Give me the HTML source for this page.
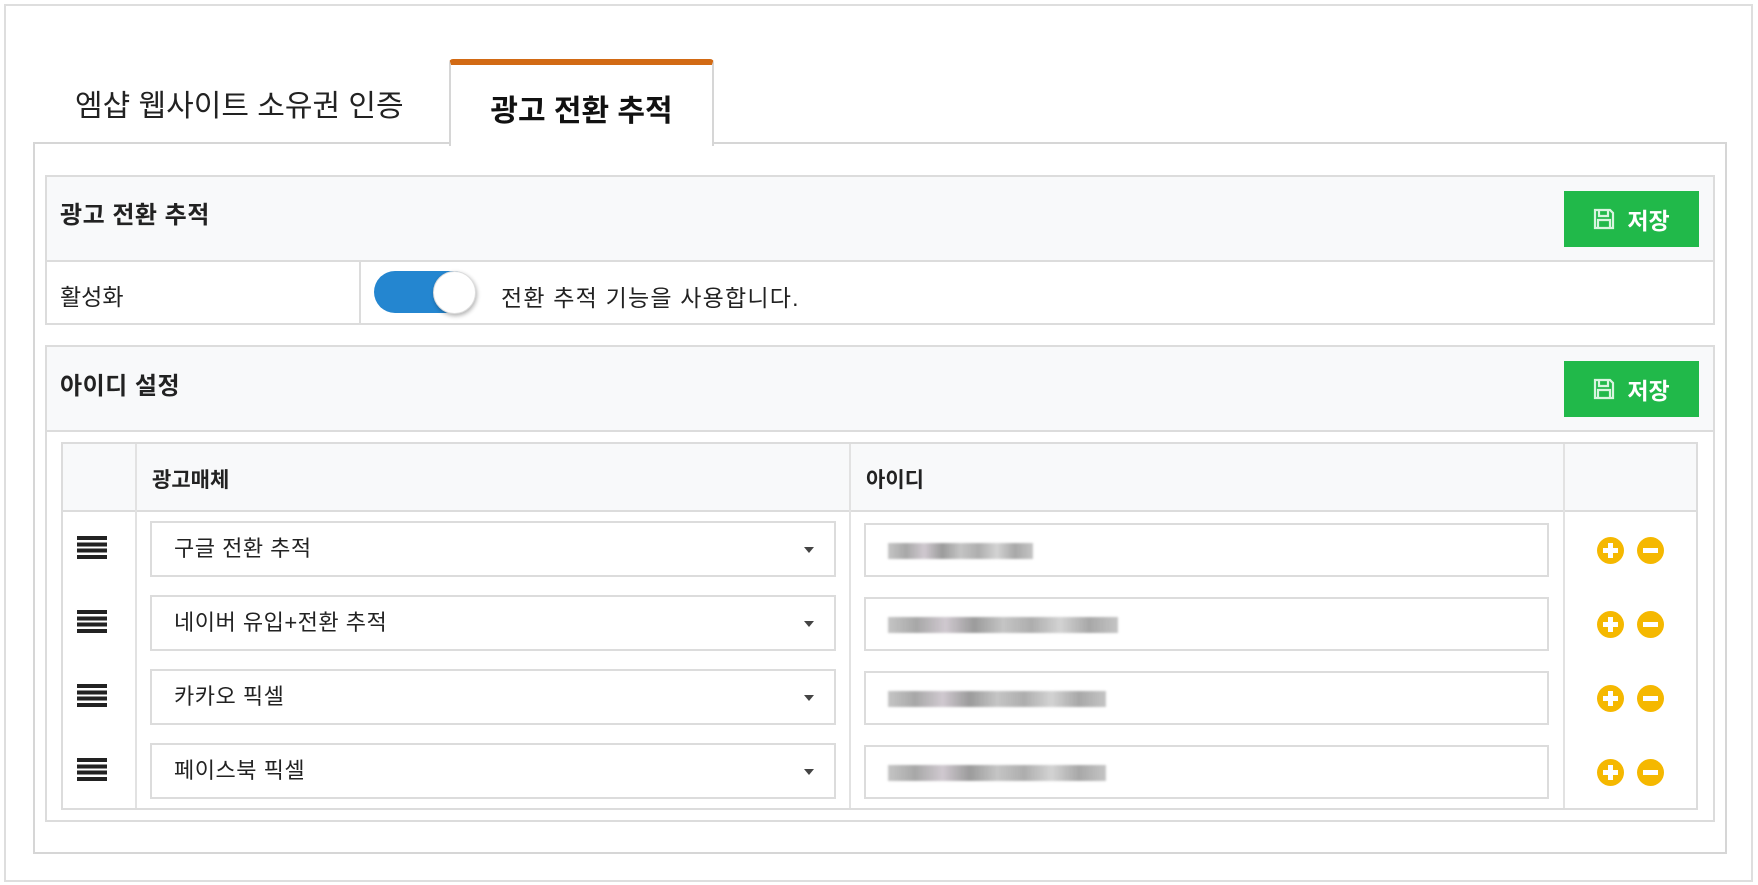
<!DOCTYPE html>
<html><head><meta charset="utf-8"><style>
*{box-sizing:border-box;margin:0;padding:0}
body{width:1758px;height:885px;background:#fff;font-family:"Liberation Sans","Noto Sans CJK KR",sans-serif;color:#222;position:relative;overflow:hidden}
.a{position:absolute}
.bd{border:2px solid #dcdcdc}
.btn{position:absolute;left:1564px;width:135px;height:56px;background:#21b94a;color:#fff;font-weight:bold;font-size:23px;display:flex;align-items:center;justify-content:center;gap:12px}
.sel{position:absolute;left:150px;width:686px;height:56px;border:2px solid #dcdcdc;background:#fff;font-size:22px;padding-left:22px;line-height:52px;letter-spacing:.5px}
.sel:after{content:"";position:absolute;right:20px;top:24px;border:5px solid transparent;border-top:6px solid #444}
.inp{position:absolute;left:864px;width:685px;height:54px;border:2px solid #dcdcdc;background:#fff}
.blur{position:absolute;left:22px;top:18px;height:16px;background:linear-gradient(90deg,#bbb,#999,#c8c0c8,#8a8a8a,#bbb,#a0a0a0,#ccc,#999,#bbb);opacity:.85;filter:blur(1px)}
.ham{position:absolute;left:77px;width:30px;height:23px;background:repeating-linear-gradient(#222 0 4px,transparent 4px 6.3px)}
.ic{position:absolute;width:27px;height:27px;border-radius:50%;background:#f5b800}
.ic.p:before{content:"";position:absolute;left:11px;top:6px;width:5px;height:15px;background:#fff}
.ic:after{content:"";position:absolute;left:6px;top:11px;width:15px;height:5px;background:#fff}
</style></head><body>
<div class="a" style="left:4px;top:4px;width:1749px;height:878px;border:2px solid #dedede"></div>
<div class="a" style="left:33px;top:142px;width:1694px;height:712px;border:2px solid #d6d6d6"></div>
<div class="a" style="left:75px;top:81px;font-size:30px;color:#222">엠샵 웹사이트 소유권 인증</div>
<div class="a" style="left:449px;top:59px;width:265px;height:87px;background:#fff;border:2px solid #d6d6d6;border-bottom:none;border-top:6px solid #d26a14;border-radius:4px 4px 0 0"></div>
<div class="a" style="left:449px;top:86px;width:265px;text-align:center;font-size:30px;font-weight:bold;color:#111">광고 전환 추적</div>
<!-- panel 1 -->
<div class="a bd" style="left:45px;top:175px;width:1670px;height:150px"></div>
<div class="a" style="left:47px;top:177px;width:1666px;height:85px;background:#f8f9fa;border-bottom:2px solid #dcdcdc"></div>
<div class="a" style="left:60px;top:195px;font-size:24px;font-weight:bold;letter-spacing:.5px">광고 전환 추적</div>
<div class="btn" style="top:191px"><svg width="22" height="22" viewBox="0 0 22 22"><path d="M2 2h15l3 3v15H2z M6 2v6h9V2 M5 20v-8h12v8" fill="none" stroke="#d8f5df" stroke-width="2.2"/></svg>저장</div>
<div class="a" style="left:359px;top:262px;width:2px;height:62px;background:#dcdcdc"></div>
<div class="a" style="left:60px;top:278px;font-size:23px">활성화</div>
<div class="a" style="left:374px;top:271px;width:101px;height:42px;border-radius:21px;background:#2486d0"></div>
<div class="a" style="left:433px;top:271px;width:43px;height:43px;border-radius:50%;background:#fff;border:1px solid #ddd;box-shadow:1px 2px 4px rgba(0,0,0,.3)"></div>
<div class="a" style="left:501px;top:279px;font-size:23px;letter-spacing:1.2px">전환 추적 기능을 사용합니다.</div>
<!-- panel 2 -->
<div class="a bd" style="left:45px;top:345px;width:1670px;height:477px"></div>
<div class="a" style="left:47px;top:347px;width:1666px;height:85px;background:#f8f9fa;border-bottom:2px solid #dcdcdc"></div>
<div class="a" style="left:60px;top:366px;font-size:24px;font-weight:bold;letter-spacing:.5px">아이디 설정</div>
<div class="btn" style="top:361px"><svg width="22" height="22" viewBox="0 0 22 22"><path d="M2 2h15l3 3v15H2z M6 2v6h9V2 M5 20v-8h12v8" fill="none" stroke="#d8f5df" stroke-width="2.2"/></svg>저장</div>
<!-- table -->
<div class="a bd" style="left:61px;top:442px;width:1637px;height:368px"></div>
<div class="a" style="left:63px;top:444px;width:1633px;height:68px;background:#f8f9fa;border-bottom:2px solid #dcdcdc"></div>
<div class="a" style="left:135px;top:444px;width:2px;height:364px;background:#e2e2e2"></div>
<div class="a" style="left:849px;top:444px;width:2px;height:364px;background:#e2e2e2"></div>
<div class="a" style="left:1563px;top:444px;width:2px;height:364px;background:#e2e2e2"></div>
<div class="a" style="left:152px;top:464px;font-size:21px;font-weight:bold">광고매체</div>
<div class="a" style="left:866px;top:464px;font-size:21px;font-weight:bold">아이디</div>

<div class="ham" style="top:536px"></div>
<div class="sel" style="top:521px">구글 전환 추적</div>
<div class="inp" style="top:523px"><div class="blur" style="width:145px"></div></div>
<div class="ic p" style="left:1597px;top:537px"></div><div class="ic" style="left:1637px;top:537px"></div>

<div class="ham" style="top:610px"></div>
<div class="sel" style="top:595px">네이버 유입+전환 추적</div>
<div class="inp" style="top:597px"><div class="blur" style="width:230px"></div></div>
<div class="ic p" style="left:1597px;top:611px"></div><div class="ic" style="left:1637px;top:611px"></div>

<div class="ham" style="top:684px"></div>
<div class="sel" style="top:669px">카카오 픽셀</div>
<div class="inp" style="top:671px"><div class="blur" style="width:218px"></div></div>
<div class="ic p" style="left:1597px;top:685px"></div><div class="ic" style="left:1637px;top:685px"></div>

<div class="ham" style="top:758px"></div>
<div class="sel" style="top:743px">페이스북 픽셀</div>
<div class="inp" style="top:745px"><div class="blur" style="width:218px"></div></div>
<div class="ic p" style="left:1597px;top:759px"></div><div class="ic" style="left:1637px;top:759px"></div>
</body></html>
